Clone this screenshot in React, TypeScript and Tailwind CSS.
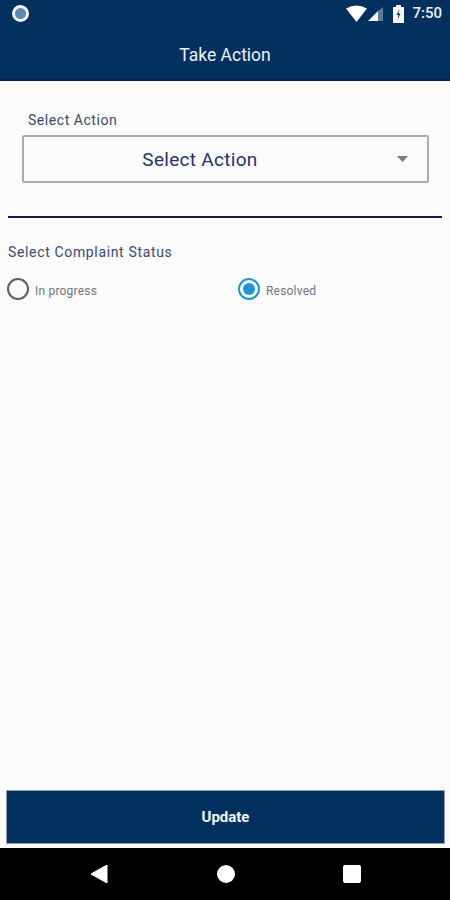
import React from 'react';

const font = { fontFamily: 'Roboto, sans-serif' };

const StatusBar = () => (
  <div className="h-[27px] flex items-center justify-between pl-[12px] pr-[8px]">
    <div className="w-[17px] h-[17px] rounded-full border-[3px] border-[#f2f5f8] bg-[#5f86ad]" />
    <div className="flex items-center">
      <svg width="21" height="18" viewBox="0 0 21 18" className="mr-[1px]">
        <path d="M0 3.5 Q10.5 -2.5 21 3.5 L10.5 17 Z" fill="#ffffff" />
      </svg>
      <svg width="16" height="16" viewBox="0 0 16 16" className="mr-[9px] mt-[1px]">
        <path d="M0 15 L10 15 L10 5 Z" fill="#f4f6f8" />
        <path d="M10 15 L15 15 L15 1 L10 5 Z" fill="#5b7c9e" />
      </svg>
      <svg width="11" height="18" viewBox="0 0 11 18" className="mr-[8px]">
        <path d="M0 2 H3 V0 H8 V2 H11 V18 H0 Z" fill="#f7f8fa" />
        <path d="M6.5 4 L3.5 10 H5.5 L4.5 15 L7.5 8.5 H5.5 Z" fill="#03315f" />
      </svg>
      <span className="text-[15px] leading-none font-medium text-[#eef2f6]">7:50</span>
    </div>
  </div>
);

const Radio = ({ label, checked }: { label: string; checked?: boolean }) => (
  <div className="flex items-center gap-[6px]">
    <div
      className={`w-[22px] h-[22px] rounded-full border-2 flex items-center justify-center ${
        checked ? 'border-[#1a96d4]' : 'border-[#5c5f63]'
      }`}
    >
      {checked && <div className="w-[12px] h-[12px] rounded-full bg-[#1a96d4]" />}
    </div>
    <span className="text-[12px] pt-[3px] tracking-[0.2px] text-[#6f7782]">{label}</span>
  </div>
);

export default function App() {
  return (
    <div className="w-[450px] h-[900px] flex flex-col bg-[#fbfbfb] overflow-hidden" style={font}>
      <header className="h-[81px] bg-[#03315f] border-b-2 border-[#0c1c4c] text-white">
        <StatusBar />
        <h1 className="text-center text-[17.5px] leading-[24px] mt-[16px] text-[#eef1f5]">Take Action</h1>
      </header>

      <main className="flex-1 flex flex-col">
        <div className="pl-[22px] pr-[21px] pt-[29px]">
          <div className="pl-[6px] text-[14px] leading-[20px] tracking-[0.55px] text-[#3a4a70] mb-[5px]">Select Action</div>
          <div className="h-[48px] border-2 border-[#a9acaf] rounded-[2px] relative flex items-center">
            <span className="w-[352px] pt-[3px] text-center text-[19px] text-[#27336a] tracking-[0.3px]">Select Action</span>
            <svg width="11" height="6" viewBox="0 0 11 6" className="absolute right-[19px] top-[19px]">
              <path d="M0 0 H11 L5.5 6 Z" fill="#7b7d80" />
            </svg>
          </div>
        </div>

        <div className="mx-[8px] mt-[33px] h-[2px] bg-[#15194f]" />

        <div className="px-[8px] mt-[24px] text-[14px] leading-[20px] tracking-[0.65px] text-[#3a4a70]">
          Select Complaint Status
        </div>

        <div className="flex mt-[16px] pl-[7px]">
          <div className="w-[231px]">
            <Radio label="In progress" />
          </div>
          <Radio label="Resolved" checked />
        </div>

        <div className="flex-1" />

        <div className="pl-[6px] pr-[5px] pb-[4px]">
          <button className="w-full h-[54px] bg-[#03315f] border border-[#8d9cb0] text-[15px] font-bold text-[#f2f4f8]">
            Update
          </button>
        </div>
      </main>

      <nav className="h-[52px] bg-black flex items-center justify-center pb-[1px]">
        <div className="w-[450px] flex items-center justify-between pl-[90px] pr-[89px]">
          <svg width="18" height="18" viewBox="0 0 18 18">
            <path d="M17 0 V18 L1 9 Z" fill="#ffffff" stroke="#ffffff" strokeLinejoin="round" />
          </svg>
          <div className="w-[18px] h-[18px] rounded-full bg-white" />
          <div className="w-[18px] h-[18px] rounded-[2px] bg-white" />
        </div>
      </nav>
    </div>
  );
}
